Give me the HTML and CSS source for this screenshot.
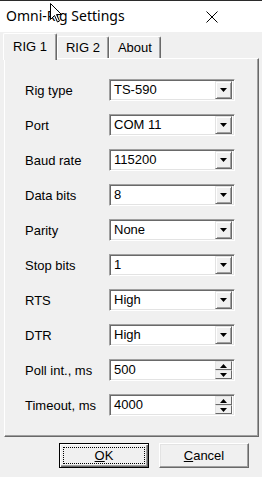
FILE: index.html
```html
<!DOCTYPE html>
<html lang="en">
<head>
  <meta charset="UTF-8">
  <meta name="viewport" content="width=device-width, initial-scale=1.0">
  <title>Omni-Rig Settings</title>
  <link rel="stylesheet" href="styles.css">
</head>
<body>

  <div class="ventana">
    <div class="barra-titulo">
      <span class="titulo">Omni-Rig Settings</span>
      <span class="cerrar">
        <svg width="12" height="12" viewBox="0 0 12 12"><path d="M0.5 0.5 L11.5 11.5 M11.5 0.5 L0.5 11.5" stroke="#000" stroke-width="1"/></svg>
      </span>
    </div>

    <div class="contenido">
      <div class="pestanas">
        <div class="pestana activa">RIG 1</div>
        <div class="pestana">RIG 2</div>
        <div class="pestana">About</div>
      </div>

      <div class="panel">
        <div class="fila"><span class="etiqueta">Rig type</span><div class="combo"><span class="valor">TS-590</span><span class="boton-flecha"><svg width="7" height="4" viewBox="0 0 7 4"><polygon points="0,0 7,0 3.5,4" fill="#000"/></svg></span></div></div>
        <div class="fila"><span class="etiqueta">Port</span><div class="combo"><span class="valor">COM 11</span><span class="boton-flecha"><svg width="7" height="4" viewBox="0 0 7 4"><polygon points="0,0 7,0 3.5,4" fill="#000"/></svg></span></div></div>
        <div class="fila"><span class="etiqueta">Baud rate</span><div class="combo"><span class="valor">115200</span><span class="boton-flecha"><svg width="7" height="4" viewBox="0 0 7 4"><polygon points="0,0 7,0 3.5,4" fill="#000"/></svg></span></div></div>
        <div class="fila"><span class="etiqueta">Data bits</span><div class="combo"><span class="valor">8</span><span class="boton-flecha"><svg width="7" height="4" viewBox="0 0 7 4"><polygon points="0,0 7,0 3.5,4" fill="#000"/></svg></span></div></div>
        <div class="fila"><span class="etiqueta">Parity</span><div class="combo"><span class="valor">None</span><span class="boton-flecha"><svg width="7" height="4" viewBox="0 0 7 4"><polygon points="0,0 7,0 3.5,4" fill="#000"/></svg></span></div></div>
        <div class="fila"><span class="etiqueta">Stop bits</span><div class="combo"><span class="valor">1</span><span class="boton-flecha"><svg width="7" height="4" viewBox="0 0 7 4"><polygon points="0,0 7,0 3.5,4" fill="#000"/></svg></span></div></div>
        <div class="fila"><span class="etiqueta">RTS</span><div class="combo"><span class="valor">High</span><span class="boton-flecha"><svg width="7" height="4" viewBox="0 0 7 4"><polygon points="0,0 7,0 3.5,4" fill="#000"/></svg></span></div></div>
        <div class="fila"><span class="etiqueta">DTR</span><div class="combo"><span class="valor">High</span><span class="boton-flecha"><svg width="7" height="4" viewBox="0 0 7 4"><polygon points="0,0 7,0 3.5,4" fill="#000"/></svg></span></div></div>
        <div class="fila"><span class="etiqueta">Poll int., ms</span><div class="combo"><span class="valor">500</span><span class="spin"><span class="spin-mitad"><svg width="7" height="4" viewBox="0 0 7 4"><polygon points="0,4 7,4 3.5,0" fill="#000"/></svg></span><span class="spin-mitad"><svg width="7" height="4" viewBox="0 0 7 4"><polygon points="0,0 7,0 3.5,4" fill="#000"/></svg></span></span></div></div>
        <div class="fila"><span class="etiqueta">Timeout, ms</span><div class="combo"><span class="valor">4000</span><span class="spin"><span class="spin-mitad"><svg width="7" height="4" viewBox="0 0 7 4"><polygon points="0,4 7,4 3.5,0" fill="#000"/></svg></span><span class="spin-mitad"><svg width="7" height="4" viewBox="0 0 7 4"><polygon points="0,0 7,0 3.5,4" fill="#000"/></svg></span></span></div></div>
      </div>

      <div class="botones">
        <div class="boton defecto"><span class="foco"><u>O</u>K</span></div>
        <div class="boton"><u>C</u>ancel</div>
      </div>
    </div>
  </div>

  <!-- puntero del raton sobre el titulo -->
  <svg class="puntero" width="13" height="20" viewBox="0 0 13 20">
    <polygon points="0.5,0.5 0.5,16.5 4.5,12.5 7.5,19 9.5,18 6.5,11.5 11.5,11.5" fill="#fff" stroke="#000" stroke-width="1"/>
  </svg>

</body>
</html>
```

FILE: styles.css
```css
body {
  margin: 0;
  width: 262px;
  height: 477px;
  overflow: hidden;
  background-color: #f0f0f0;
  font-family: 'Liberation Sans', Arial, sans-serif;
  font-size: 13px;
  color: #000;
}

.ventana {
  position: relative;
}

.barra-titulo {
  height: 32px;
  box-sizing: border-box;
  background-color: #fff;
  border-top: 1px solid #2b2b2b;
  display: flex;
  align-items: center;
  padding-left: 6px;
}

.titulo {
  font-family: 'Noto Sans', 'Open Sans', sans-serif;
  font-size: 14px;
  color: #000;
  padding-bottom: 2px;
}

.cerrar {
  margin-left: auto;
  margin-right: 44px;
  display: flex;
}

.contenido {
  padding: 1px 0 0 3px;
}

/* pestanas */
.pestanas {
  display: flex;
  align-items: flex-end;
  height: 25px;
}

.pestana {
  height: 22px;
  box-sizing: border-box;
  padding: 3px 8px 0 8px;
  border-top: 1px solid #fff;
  border-left: 1px solid #fff;
  border-right: 1px solid #696969;
  box-shadow: inset -1px 0 #a0a0a0;
  border-radius: 2px 2px 0 0;
  background-color: #f0f0f0;
}

.pestana.activa {
  height: 27px;
  margin-bottom: -2px;
  padding: 5px 9px 0 9px;
  position: relative;
  z-index: 1;
}

.panel {
  margin-left: 1px;
  width: 255px;
  height: 379px;
  box-sizing: border-box;
  border-top: 1px solid #fff;
  border-left: 1px solid #fff;
  border-right: 1px solid #696969;
  border-bottom: 1px solid #696969;
  box-shadow: inset -1px -1px #a0a0a0;
  padding: 20px 0 0 20px;
  display: flex;
  flex-direction: column;
  gap: 13px;
}

.fila {
  display: flex;
  align-items: center;
  height: 22px;
}

.etiqueta {
  width: 84px;
}

.combo {
  width: 126px;
  height: 22px;
  box-sizing: border-box;
  background-color: #fff;
  border-top: 1px solid #a0a0a0;
  border-left: 1px solid #a0a0a0;
  border-right: 1px solid #fff;
  border-bottom: 1px solid #fff;
  box-shadow: inset 1px 1px #696969, inset -1px -1px #e3e3e3;
  padding: 1px;
  display: flex;
}

.valor {
  flex: 1;
  padding-left: 3px;
  line-height: 18px;
}

.boton-flecha {
  width: 17px;
  height: 18px;
  box-sizing: border-box;
  background-color: #f0f0f0;
  border-top: 1px solid #e3e3e3;
  border-left: 1px solid #e3e3e3;
  border-right: 1px solid #696969;
  border-bottom: 1px solid #696969;
  box-shadow: inset 1px 1px #fff, inset -1px -1px #a0a0a0;
  display: flex;
  align-items: center;
  justify-content: center;
  margin-right: 1px;
}

.spin {
  width: 17px;
  height: 18px;
  display: flex;
  flex-direction: column;
  margin-right: 1px;
}

.spin-mitad {
  flex: 1;
  box-sizing: border-box;
  background-color: #f0f0f0;
  border-top: 1px solid #e3e3e3;
  border-left: 1px solid #e3e3e3;
  border-right: 1px solid #696969;
  border-bottom: 1px solid #696969;
  display: flex;
  align-items: center;
  justify-content: center;
}

/* botones de abajo */
.botones {
  display: flex;
  gap: 10px;
  padding: 6px 0 0 56px;
}

.boton {
  width: 90px;
  height: 25px;
  box-sizing: border-box;
  background-color: #f0f0f0;
  border-top: 1px solid #fff;
  border-left: 1px solid #fff;
  border-right: 1px solid #696969;
  border-bottom: 1px solid #696969;
  box-shadow: inset -1px -1px #a0a0a0, inset 1px 1px #e3e3e3;
  display: flex;
  align-items: center;
  justify-content: center;
}

.boton.defecto {
  border: 1px solid #000;
  box-shadow: inset 1px 1px #fff, inset -1px -1px #696969, inset -2px -2px #a0a0a0;
  padding: 3px;
}

.foco {
  flex: 1;
  align-self: stretch;
  border: 1px dotted #000;
  display: flex;
  align-items: center;
  justify-content: center;
}

.puntero {
  position: absolute;
  left: 50px;
  top: 3px;
}
```
